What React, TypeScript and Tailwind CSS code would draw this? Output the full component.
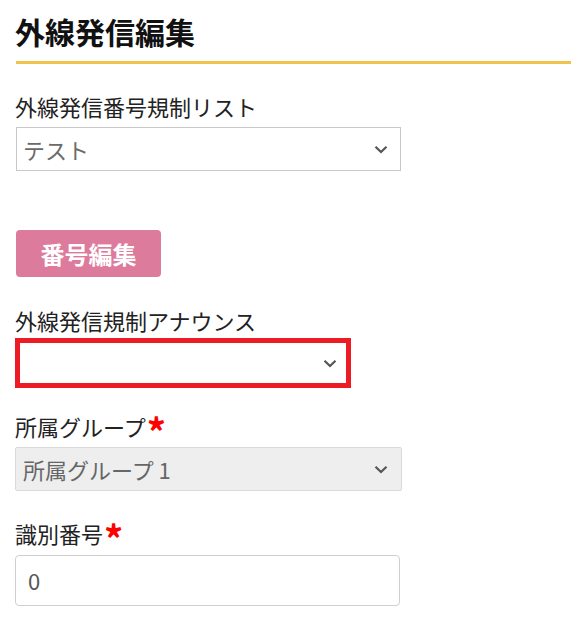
import React from "react";

const font = { fontFamily: '"Noto Sans CJK JP", "Noto Sans", sans-serif' };

function Chevron() {
	return (
		<svg width="14" height="9" viewBox="0 0 14 9" className="shrink-0">
			<path d="M1.5 1.8 L7 7 L12.5 1.8" fill="none" stroke="#555" strokeWidth="2.2" />
		</svg>
	);
}

function Label({ text, required }: { text: string; required?: boolean }) {
	return (
		<div className="flex items-center text-[22px] leading-[30px] text-[#222]">
			<span>{text}</span>
			{required && <span className="ml-[1px] text-[38px] font-bold leading-[30px] text-[#ff0000] translate-y-[5px]">*</span>}
		</div>
	);
}

export default function App() {
	return (
		<div className="min-h-[625px] bg-white pl-[15px]" style={font}>
			<h1 className="mt-[13px] text-[30px] font-bold leading-[36px] text-[#111]">外線発信編集</h1>
			<div className="mt-[12px] ml-[1px] h-[3px] bg-[#f1c34c]" />

			<div className="mt-[27px]">
				<Label text="外線発信番号規制リスト" />
			</div>
			<div className="mt-[6px] ml-[1px] flex h-[44px] w-[385px] items-center justify-between border border-[#c8c8c8] pl-[6px] pr-[12px]">
				<span className="text-[22px] text-[#6a6a6a]">テスト</span>
				<Chevron />
			</div>

			<button className="mt-[59px] ml-[1px] flex h-[47px] w-[145px] items-center justify-center rounded-[4px] bg-[#dc7b9c] text-[24px] font-bold text-white">
				番号編集
			</button>

			<div className="mt-[28px]">
				<Label text="外線発信規制アナウンス" />
			</div>
			<div className="mt-[3px] flex h-[50px] w-[336px] items-center justify-end border-[5px] border-[#ed1c24] pr-[9px]">
				<Chevron />
			</div>

			<div className="mt-[23px]">
				<Label text="所属グループ" required />
			</div>
			<div className="mt-[6px] flex h-[44px] w-[387px] items-center justify-between rounded-[2px] border border-[#dadada] bg-[#eeeeee] pl-[7px] pr-[13px]">
				<span className="text-[22px] text-[#666]">所属グループ 1</span>
				<Chevron />
			</div>

			<div className="mt-[27px]">
				<Label text="識別番号" required />
			</div>
			<div className="mt-[7px] flex h-[51px] w-[385px] items-center rounded-[4px] border border-[#cfcfcf] pl-[12px]">
				<span className="text-[22px] text-[#555]">0</span>
			</div>
		</div>
	);
}
